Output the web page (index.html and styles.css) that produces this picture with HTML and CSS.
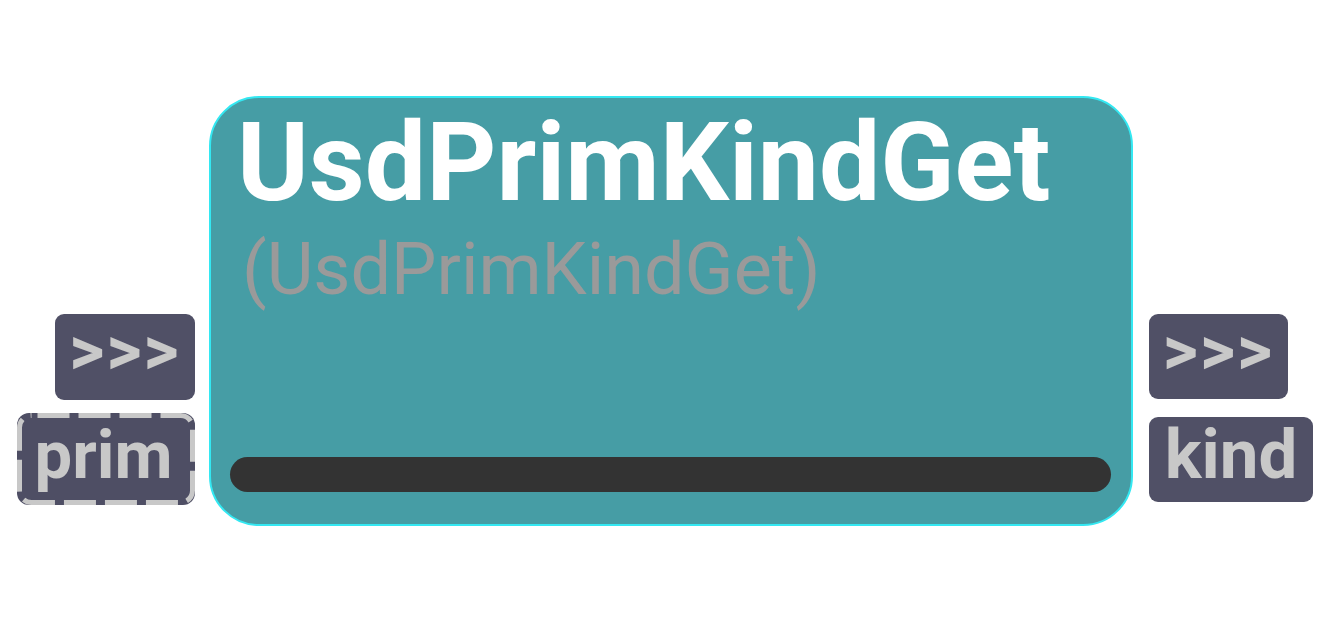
FILE: index.html
```html
<!DOCTYPE html>
<html>
<head>
<meta charset="utf-8">
<link rel="stylesheet" href="styles.css">
</head>
<body>
<div class="canvas">
  <div class="ports ports-in">
    <div class="port port-exec">&gt;&gt;&gt;</div>
    <div class="port port-prim">
      <svg class="dash" width="178" height="92" viewBox="0 0 178 92"><rect x="2.5" y="2.5" width="173" height="87" rx="12" ry="12" fill="none" stroke="#c8c8c8" stroke-width="5" stroke-dasharray="32 9" stroke-dashoffset="-6"/></svg>
      <span>prim</span>
    </div>
  </div>
  <div class="node">
    <div class="title">UsdPrimKindGet</div>
    <div class="subtitle">(UsdPrimKindGet)</div>
    <div class="bar"></div>
  </div>
  <div class="ports ports-out">
    <div class="port port-exec">&gt;&gt;&gt;</div>
    <div class="port port-kind">kind</div>
  </div>
</div>
</body>
</html>
```

FILE: styles.css
```css
html, body {
  margin: 0;
  padding: 0;
  background: #ffffff;
}
body {
  font-family: Roboto, "Liberation Sans", sans-serif;
}
.canvas {
  display: flex;
  align-items: flex-start;
  padding: 96px 0 0 17px;
}
.ports {
  display: flex;
  flex-direction: column;
}
.ports-in {
  width: 178px;
  align-items: flex-end;
  margin-top: 218px;
  margin-right: 14px;
  gap: 13px;
}
.ports-out {
  align-items: flex-start;
  margin-top: 218px;
  margin-left: 16px;
  gap: 18px;
}
.port {
  position: relative;
  display: flex;
  align-items: center;
  justify-content: center;
  background: #505066;
  color: #c8c8c8;
  font-weight: 700;
  line-height: 1;
  border-radius: 9px;
  box-sizing: border-box;
  padding-bottom: 10px;
}
.port-exec {
  width: 140px;
  height: 86px;
  font-size: 68px;
  letter-spacing: 2px;
  padding-bottom: 12px;
}
.ports-out .port-exec {
  width: 139px;
  height: 85px;
}
.port-prim {
  width: 178px;
  height: 92px;
  font-size: 67px;
  background: #4e4e64;
  border-radius: 12px;
  padding-right: 5px;
  padding-bottom: 8px;
}
.port-prim span {
  position: relative;
}
.dash {
  position: absolute;
  left: 0;
  top: 0;
}
.port-kind {
  width: 164px;
  height: 85px;
  font-size: 69px;
}
.node {
  width: 924px;
  height: 430px;
  box-sizing: border-box;
  background: #469da5;
  border: 2px solid #33e8f2;
  border-radius: 50px;
  display: flex;
  flex-direction: column;
  padding: 11px 20px 32px 19px;
}
.title {
  font-size: 109px;
  font-weight: 700;
  line-height: 1;
  color: #ffffff;
  padding-left: 7px;
}
.subtitle {
  font-size: 72px;
  font-weight: 400;
  line-height: 1;
  color: #9a9a9a;
  margin-top: 16px;
  padding-left: 12px;
}
.bar {
  margin-top: auto;
  height: 35px;
  border-radius: 18px;
  background: #333333;
}
```
